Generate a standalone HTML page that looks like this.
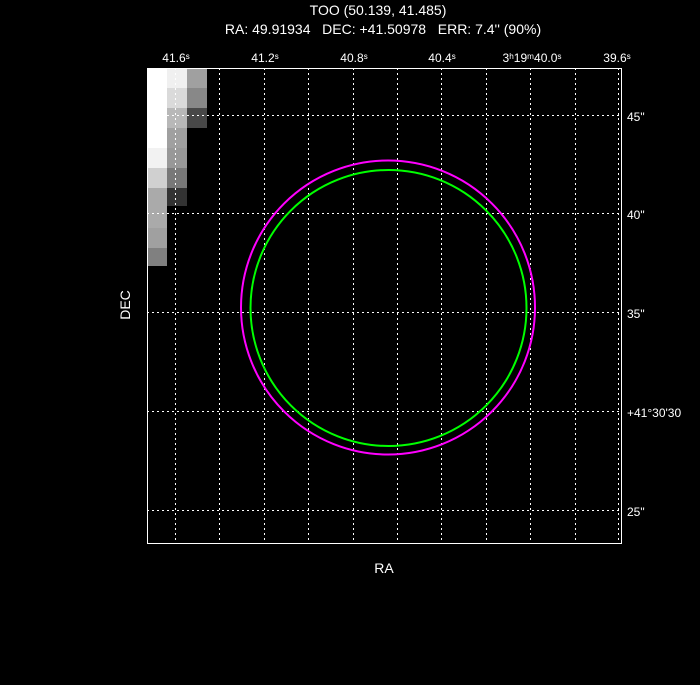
<!DOCTYPE html><html><head><style>body{margin:0;background:#000;width:700px;height:680px;overflow:hidden}text{white-space:pre}</style></head><body>
<svg width="700" height="680" xmlns="http://www.w3.org/2000/svg" font-family="Liberation Sans, sans-serif" fill="#fff" font-size="14">
<rect width="700" height="680" fill="#000"/>
<g shape-rendering="crispEdges">
<rect x="147" y="68" width="20" height="80" fill="#fff"/>
<rect x="147" y="148" width="20" height="20" fill="#f2f2f2"/>
<rect x="147" y="168" width="20" height="20" fill="#d0d0d0"/>
<rect x="147" y="188" width="20" height="40" fill="#aaa"/>
<rect x="147" y="228" width="20" height="20" fill="#a0a0a0"/>
<rect x="147" y="248" width="20" height="18" fill="#808080"/>
<rect x="167" y="68" width="20" height="20" fill="#f0f0f0"/>
<rect x="167" y="88" width="20" height="20" fill="#dadada"/>
<rect x="167" y="108" width="20" height="20" fill="#b8b8b8"/>
<rect x="167" y="128" width="20" height="20" fill="#a0a0a0"/>
<rect x="167" y="148" width="20" height="20" fill="#989898"/>
<rect x="167" y="168" width="20" height="20" fill="#787878"/>
<rect x="167" y="188" width="20" height="18" fill="#333"/>
<rect x="187" y="68" width="20" height="20" fill="#a0a0a0"/>
<rect x="187" y="88" width="20" height="20" fill="#888"/>
<rect x="187" y="108" width="20" height="20" fill="#484848"/>
<g stroke="#fff" stroke-width="1" stroke-dasharray="2,3">
<line x1="175.5" y1="68" x2="175.5" y2="543"/><line x1="219.5" y1="68" x2="219.5" y2="543"/><line x1="264.5" y1="68" x2="264.5" y2="543"/><line x1="308.5" y1="68" x2="308.5" y2="543"/><line x1="353.5" y1="68" x2="353.5" y2="543"/><line x1="397.5" y1="68" x2="397.5" y2="543"/><line x1="441.5" y1="68" x2="441.5" y2="543"/><line x1="486.5" y1="68" x2="486.5" y2="543"/><line x1="530.5" y1="68" x2="530.5" y2="543"/><line x1="575.5" y1="68" x2="575.5" y2="543"/><line x1="618.5" y1="68" x2="618.5" y2="543"/>
<line x1="147" y1="115.5" x2="622" y2="115.5"/><line x1="147" y1="213.5" x2="622" y2="213.5"/><line x1="147" y1="312.5" x2="622" y2="312.5"/><line x1="147" y1="411.5" x2="622" y2="411.5"/><line x1="147" y1="510.5" x2="622" y2="510.5"/>
</g>
<rect x="147.5" y="68.5" width="474" height="475" fill="none" stroke="#fff"/>
</g>
<circle cx="388" cy="307.5" r="147" fill="none" stroke="#f0f" stroke-width="2"/>
<circle cx="388.5" cy="308" r="138" fill="none" stroke="#0f0" stroke-width="2"/>
<text x="378" y="15" text-anchor="middle">TOO (50.139, 41.485)</text>
<text x="383" y="34" text-anchor="middle" xml:space="preserve">RA: 49.91934   DEC: +41.50978   ERR: 7.4'' (90%)</text>
<g font-size="12">
<text x="176" y="62" text-anchor="middle">41.6ˢ</text>
<text x="265" y="62" text-anchor="middle">41.2ˢ</text>
<text x="354" y="62" text-anchor="middle">40.8ˢ</text>
<text x="442" y="62" text-anchor="middle">40.4ˢ</text>
<text x="532" y="62" text-anchor="middle">3ʰ19ᵐ40.0ˢ</text>
<text x="617" y="62" text-anchor="middle">39.6ˢ</text>
<text x="627" y="121">45"</text>
<text x="627" y="219">40"</text>
<text x="627" y="318">35"</text>
<text x="627" y="417">+41°30'30</text>
<text x="627" y="516">25"</text>
</g>
<text x="384" y="573" text-anchor="middle">RA</text>
<text transform="translate(130,305) rotate(-90)" text-anchor="middle">DEC</text>
</svg></body></html>
